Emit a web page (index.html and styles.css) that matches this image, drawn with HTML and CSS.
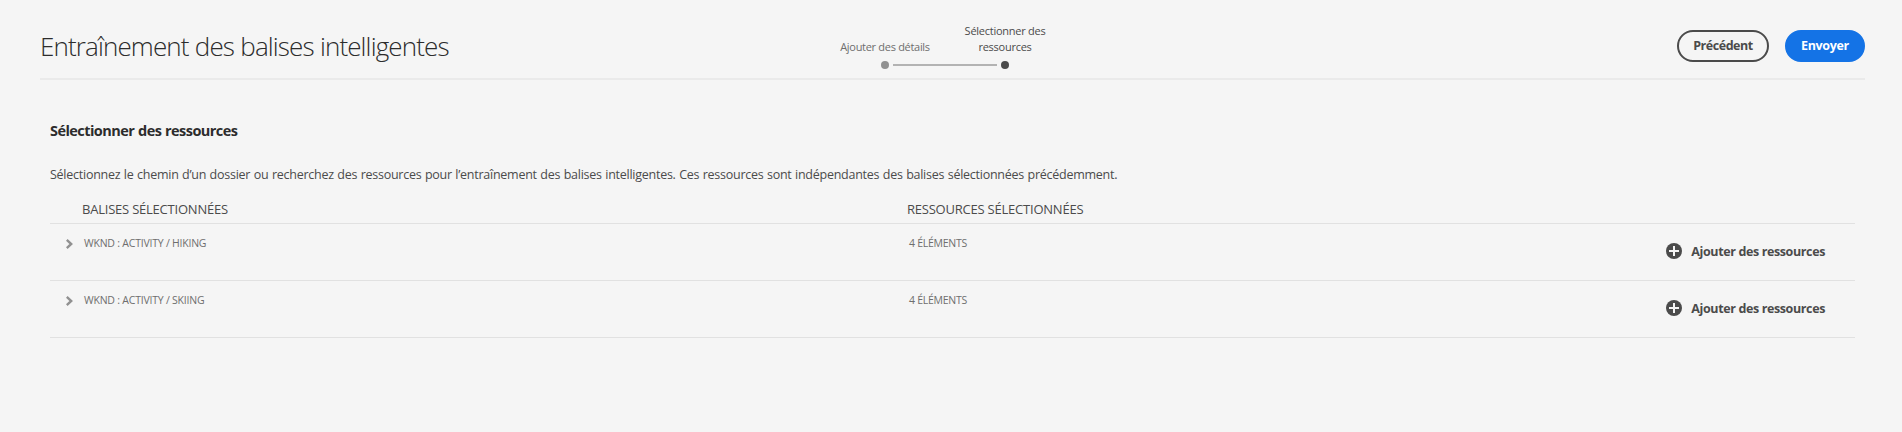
FILE: index.html
```html
<!DOCTYPE html>
<html lang="fr">
<head>
<meta charset="utf-8">
<title>Entraînement des balises intelligentes</title>
<link rel="stylesheet" href="styles.css">
</head>
<body>
<header class="header">
  <h1 class="title">Entraînement des balises intelligentes</h1>
  <ol class="steps">
    <li class="step"><span class="step-label">Ajouter des détails</span><span class="dot"></span></li>
    <li class="step step-current"><span class="step-label step-label-wide">Sélectionner des<br><span class="step-second">ressources</span></span><span class="dot"></span></li>
  </ol>
  <div class="actions">
    <button class="button button-previous">Précédent</button>
    <button class="button button-send">Envoyer</button>
  </div>
</header>
<main class="content">
  <h2 class="subtitle">Sélectionner des ressources</h2>
  <p class="description">Sélectionnez le chemin d’un dossier ou recherchez des ressources pour l’entraînement des balises intelligentes. Ces ressources sont indépendantes des balises sélectionnées précédemment.</p>
  <div class="table">
    <div class="row head">
      <span class="head-tag">BALISES SÉLECTIONNÉES</span>
      <span class="head-assets">RESSOURCES SÉLECTIONNÉES</span>
    </div>
    <div class="row">
      <div class="tag">
        <svg class="chevron" viewBox="0 0 7 10"><path d="M.8 .9L5.2 5 .8 9.1"/></svg>
        <span>WKND : ACTIVITY / HIKING</span>
      </div>
      <span class="count">4 ÉLÉMENTS</span>
      <button class="add">
        <svg class="plus" viewBox="0 0 16 16"><circle cx="8" cy="8" r="8"/><path d="M8 3v10M3 8h10"/></svg>
        <span class="add-label">Ajouter des ressources</span>
      </button>
    </div>
    <div class="row">
      <div class="tag">
        <svg class="chevron" viewBox="0 0 7 10"><path d="M.8 .9L5.2 5 .8 9.1"/></svg>
        <span>WKND : ACTIVITY / SKIING</span>
      </div>
      <span class="count">4 ÉLÉMENTS</span>
      <button class="add">
        <svg class="plus" viewBox="0 0 16 16"><circle cx="8" cy="8" r="8"/><path d="M8 3v10M3 8h10"/></svg>
        <span class="add-label">Ajouter des ressources</span>
      </button>
    </div>
  </div>
</main>
</body>
</html>
```
FILE: styles.css
```css
* { box-sizing: border-box; }

body {
  margin: 0;
  background: #f5f5f5;
  color: #4b4b4b;
  font: 12.5px/20px "Open Sans", "Noto Sans", sans-serif;
}

h1, h2, p, ol { margin: 0; padding: 0; }

button {
  background: none;
  border: 0;
  color: inherit;
  font: inherit;
  padding: 0;
  white-space: nowrap;
}

.header {
  display: grid;
  grid-template-columns: 785px 240px 1fr;
  height: 80px;
  margin: 0 37px 0 40px;
  border-bottom: 2px solid #eaeaea;
}

.title {
  padding-top: 30px;
  color: #2c2c2c;
  font-size: 26px;
  font-weight: 300;
  line-height: 32px;
  letter-spacing: -0.87px;
  word-spacing: 0.3px;
  white-space: nowrap;
}

.steps {
  display: flex;
  list-style: none;
  height: 69px;
  font-size: 11px;
  line-height: 16px;
}

.step {
  display: flex;
  flex-direction: column;
  align-items: center;
  justify-content: flex-end;
  gap: 6px;
  width: 120px;
  color: #6e6e6e;
  text-align: center;
  white-space: nowrap;
}

.step-label { letter-spacing: -0.3px; }
.step-label-wide { letter-spacing: -0.26px; }

.dot {
  display: flex;
  align-items: center;
  width: 8px;
  height: 8px;
  border-radius: 50%;
  background: #919191;
}

.step:first-child .dot::after {
  content: "";
  flex: none;
  width: 104px;
  height: 2px;
  margin-left: 12px;
  background: #b3b3b3;
}

.step-current { color: #4b4b4b; }
.step-current .dot { background: #4b4b4b; }

.actions {
  display: flex;
  justify-content: flex-end;
  gap: 16px;
  padding-top: 30px;
}

.button {
  height: 32px;
  border: 2px solid #4b4b4b;
  border-radius: 16px;
  font-weight: 700;
}

.button-previous { width: 92px; letter-spacing: -0.45px; }

.button-send {
  width: 80px;
  border-color: #1473e6;
  background: #1473e6;
  color: #fff;
  letter-spacing: -0.35px;
}

.content { padding: 41px 47px 0 50px; }

.subtitle {
  color: #2c2c2c;
  font-size: 14.5px;
  font-weight: 700;
  line-height: 20px;
  letter-spacing: -0.55px;
  word-spacing: 0.5px;
}

.description {
  margin-top: 24px;
  letter-spacing: -0.253px;
  word-spacing: 0.5px;
}

.table { margin-top: 14px; }

.row {
  display: grid;
  grid-template-columns: 857px 1fr auto;
  height: 57px;
  border-bottom: 1px solid #e1e1e1;
}

.head {
  height: 25px;
  font-size: 13px;
  letter-spacing: -0.22px;
}

.head-tag { padding-left: 32px; }

.tag, .count {
  padding-top: 11px;
  color: #6e6e6e;
  font-size: 10.5px;
  line-height: 16px;
  letter-spacing: -0.22px;
}

.tag {
  display: flex;
  gap: 11px;
  padding-left: 16px;
}

.count { padding-left: 2px; letter-spacing: -0.27px; }

.chevron {
  width: 7px;
  height: 10px;
  margin-top: 4px;
  fill: none;
  stroke: #919191;
  stroke-width: 2.4;
}

.add {
  display: flex;
  align-items: center;
  gap: 9px;
  height: 20px;
  margin: 17px 30px 0 0;
  font-weight: 700;
  letter-spacing: -0.38px;
}

.add-label { padding-top: 2px; }

.plus {
  width: 16px;
  height: 16px;
  fill: #4b4b4b;
}

.plus path { stroke: #f5f5f5; stroke-width: 2; }
```
